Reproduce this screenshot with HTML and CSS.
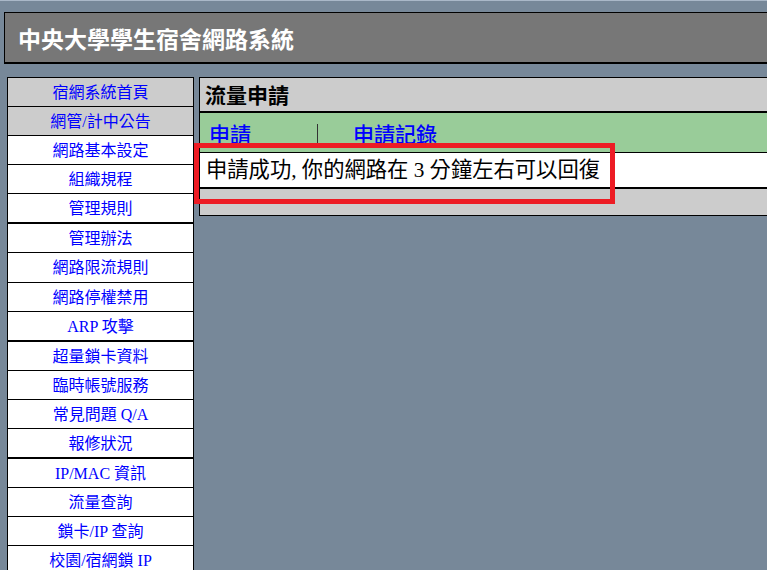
FILE: index.html
```html
<!DOCTYPE html>
<html lang="zh-Hant">
<head>
    <meta charset="UTF-8">
    <title>中央大學學生宿舍網路系統</title>
    <link rel="stylesheet" href="styles.css">
</head>
<body>
    <div class="page">
        <div class="header">中央大學學生宿舍網路系統</div>
        <div class="main">
            <div class="menu">
                <a class="menu-item gray" href="#">宿網系統首頁</a>
                <a class="menu-item gray" href="#">網管/計中公告</a>
                <a class="menu-item" href="#">網路基本設定</a>
                <a class="menu-item" href="#">組織規程</a>
                <a class="menu-item group-end" href="#">管理規則</a>
                <a class="menu-item" href="#">管理辦法</a>
                <a class="menu-item" href="#">網路限流規則</a>
                <a class="menu-item" href="#">網路停權禁用</a>
                <a class="menu-item group-end" href="#">ARP 攻擊</a>
                <a class="menu-item" href="#">超量鎖卡資料</a>
                <a class="menu-item" href="#">臨時帳號服務</a>
                <a class="menu-item" href="#">常見問題 Q/A</a>
                <a class="menu-item group-end" href="#">報修狀況</a>
                <a class="menu-item" href="#">IP/MAC 資訊</a>
                <a class="menu-item" href="#">流量查詢</a>
                <a class="menu-item" href="#">鎖卡/IP 查詢</a>
                <a class="menu-item" href="#">校園/宿網鎖 IP</a>
            </div>
            <div class="panel">
                <div class="panel-title">流量申請</div>
                <div class="tabs">
                    <a class="tab first" href="#">申請</a>
                    <span class="tab-sep"></span>
                    <a class="tab" href="#">申請記錄</a>
                </div>
                <div class="message">申請成功, 你的網路在 3 分鐘左右可以回復</div>
                <div class="panel-foot"></div>
            </div>
        </div>
    </div>
    <div class="highlight"></div>
</body>
</html>
```

FILE: styles.css
```css
html {
    overflow: hidden;
    background-color: #778899;
}

body {
    margin: 0;
    border-top: 1px solid #aab8c8;
    font-family: "Liberation Serif", "Noto Sans CJK TC", serif;
    color: #000;
}

.page {
    width: 960px;
}

.header {
    margin: 11px 0 0 4px;
    height: 49px;
    line-height: 50px;
    padding-left: 13px;
    background: #777777;
    border: 1px solid #000;
    border-bottom-width: 2px;
    color: #fff;
    font-family: "Noto Sans CJK TC", sans-serif;
    font-weight: bold;
    font-size: 23px;
}

.main {
    display: flex;
    align-items: flex-start;
    gap: 5px;
    margin: 13px 0 0 7px;
}

.menu {
    width: 185px;
    flex: none;
    background: #fff;
    border: 1px solid #000;
    border-bottom: none;
}

.menu-item {
    display: block;
    height: 28.08px;
    line-height: 29px;
    text-align: center;
    font-size: 16px;
    color: #0000ff;
    text-decoration: none;
    border-bottom: 1px solid #000;
}

.menu-item.gray {
    background: #cccccc;
}

.menu-item.group-end {
    border-bottom-width: 2px;
}

.panel {
    flex: 1;
    border: 1px solid #000;
    border-right: none;
    background: #cccccc;
}

.panel-title {
    height: 33px;
    line-height: 33px;
    padding-left: 5px;
    font-family: "Noto Sans CJK TC", sans-serif;
    font-weight: bold;
    font-size: 21px;
    border-bottom: 2px solid #000;
}

.tabs {
    display: flex;
    align-items: center;
    height: 39px;
    background: #99cc99;
    border-bottom: 1px solid #000;
}

.tab {
    font-size: 21px;
    color: #0000ff;
    text-decoration: none;
    font-family: "Noto Sans CJK TC", sans-serif;
    font-weight: 500;
    margin-top: 1px;
}

.tab.first {
    width: 108px;
    padding-left: 9px;
}

.tab-sep {
    width: 1px;
    height: 20px;
    margin: 3px 35px 0 0;
    background: #333;
}

.message {
    height: 34px;
    line-height: 35px;
    padding-left: 6px;
    background: #fff;
    font-size: 21.3px;
    border-bottom: 2px solid #000;
}

.panel-foot {
    height: 26px;
}

.highlight {
    position: absolute;
    left: 194px;
    top: 143px;
    width: 411px;
    height: 51px;
    border: 5px solid #ed1c24;
}
```
